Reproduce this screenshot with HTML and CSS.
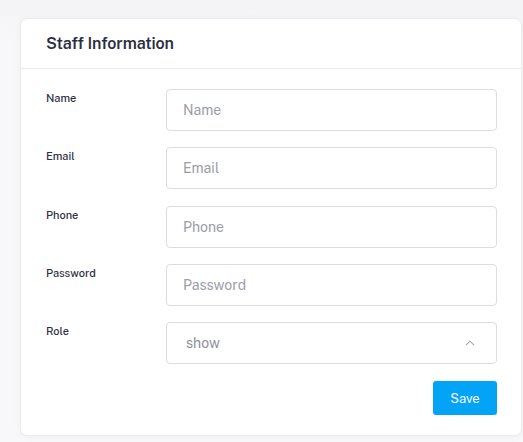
FILE: index.html
```html
<!DOCTYPE html>
<html>
<head>
<meta charset="utf-8">
<link rel="stylesheet" href="styles.css">
</head>
<body>
<div class="page">
  <div class="card">
    <div class="card-header">Staff Information</div>
    <form class="card-body">
      <div class="row">
        <label class="label">Name</label>
        <div class="field"><input class="input" placeholder="Name"></div>
      </div>
      <div class="row">
        <label class="label">Email</label>
        <div class="field"><input class="input" placeholder="Email"></div>
      </div>
      <div class="row">
        <label class="label">Phone</label>
        <div class="field"><input class="input" placeholder="Phone"></div>
      </div>
      <div class="row">
        <label class="label">Password</label>
        <div class="field"><input class="input" placeholder="Password"></div>
      </div>
      <div class="row">
        <label class="label">Role</label>
        <div class="field">
          <div class="select">
            <span class="select-value">show</span>
            <svg class="caret" width="10" height="6" viewBox="0 0 10 6"><path d="M1 5.2 L5 1.2 L9 5.2" fill="none" stroke="#a3a4b3" stroke-width="1.1"/></svg>
          </div>
        </div>
      </div>
      <div class="actions">
        <button type="button" class="btn">Save</button>
      </div>
    </form>
  </div>
</div>
</body>
</html>
```
FILE: styles.css
```css
html, body {
  margin: 0;
  padding: 0;
}
body {
  background: linear-gradient(#f3f3f6 0, #f8f8fa 40px, #f8f8fa 100%);
  font-family: "Public Sans", Inter, "Liberation Sans", sans-serif;
  height: 442px;
  overflow: hidden;
}
.page {
  padding: 18px 1px 0 20px;
}
.card {
  background: #fff;
  border: 1px solid #ebebf0;
  border-radius: 7px;
  box-shadow: 0 1px 6px rgba(70, 70, 90, 0.05);
}
.card-header {
  height: 50px;
  box-sizing: border-box;
  padding: 15px 25px 0;
  font-size: 16px;
  font-weight: 600;
  color: #2c2c3f;
  letter-spacing: -0.1px;
  border-bottom: 1px solid #e9e9ef;
}
.card-body {
  padding: 20px 24px 20px 25px;
  display: flex;
  flex-direction: column;
  gap: 16.3px;
}
.row {
  display: flex;
  align-items: flex-start;
}
.label {
  width: 120px;
  flex: none;
  font-size: 11px;
  font-weight: 500;
  color: #2e2f42;
  line-height: 14px;
  padding-top: 2px;
}
.field {
  flex: 1;
}
.input, .select {
  box-sizing: border-box;
  width: 100%;
  height: 42px;
  border: 1px solid #dcdce3;
  border-radius: 4px;
  background: #fff;
  font-family: inherit;
  font-size: 14px;
  color: #444;
  padding: 0 16px;
  outline: none;
}
.input::placeholder {
  color: #9b9ca8;
}
.select {
  display: flex;
  align-items: center;
  justify-content: space-between;
  padding: 0 21px 0 19px;
}
.select-value {
  font-size: 14px;
  color: #8e8f9c;
}
.caret {
  display: block;
  margin-top: -1px;
}
.actions {
  display: flex;
  justify-content: flex-end;
  padding-top: 1px;
}
.btn {
  width: 64px;
  height: 34px;
  background: #03a3f6;
  color: #fff;
  border: none;
  border-radius: 3px;
  font-family: inherit;
  font-size: 13px;
  font-weight: 400;
}
```
